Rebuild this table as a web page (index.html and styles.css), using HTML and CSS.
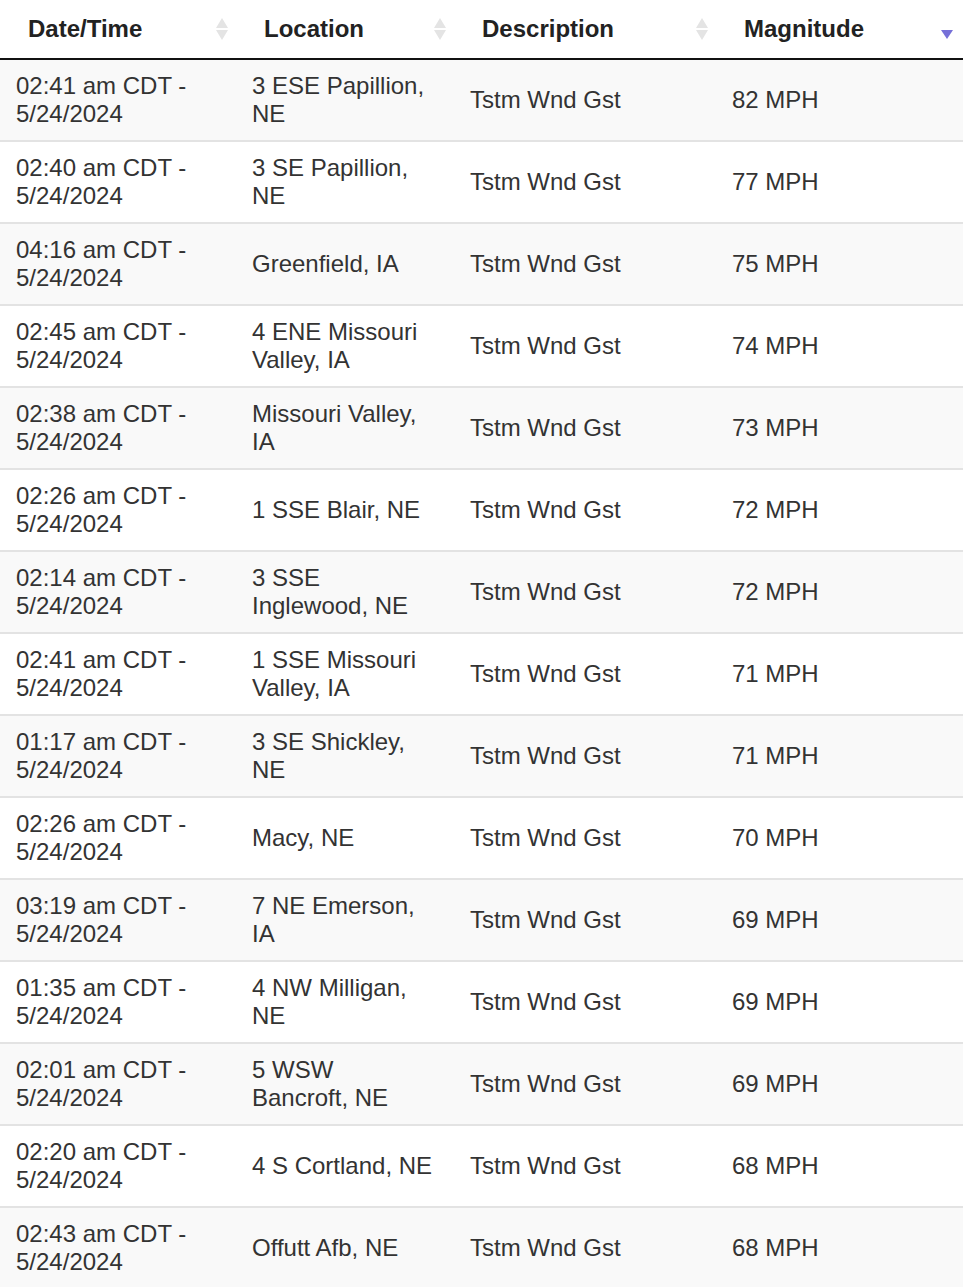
FILE: index.html
```html
<!DOCTYPE html>
<html lang="en">
<head>
<meta charset="utf-8">
<title>Storm Reports</title>
<link rel="stylesheet" href="styles.css">
</head>
<body>
<table class="reports">
  <colgroup>
    <col class="c-date"><col class="c-loc"><col class="c-desc"><col class="c-mag">
  </colgroup>
  <thead>
    <tr>
      <th class="sortable">Date/Time</th>
      <th class="sortable">Location</th>
      <th class="sortable">Description</th>
      <th class="sorted-desc">Magnitude</th>
    </tr>
  </thead>
  <tbody>
    <tr><td>02:41 am CDT - 5/24/2024</td><td class="loc">3 ESE Papillion, NE</td><td>Tstm Wnd Gst</td><td class="mag">82 MPH</td></tr>
    <tr><td>02:40 am CDT - 5/24/2024</td><td class="loc">3 SE Papillion, NE</td><td>Tstm Wnd Gst</td><td class="mag">77 MPH</td></tr>
    <tr><td>04:16 am CDT - 5/24/2024</td><td class="loc">Greenfield, IA</td><td>Tstm Wnd Gst</td><td class="mag">75 MPH</td></tr>
    <tr><td>02:45 am CDT - 5/24/2024</td><td class="loc">4 ENE Missouri Valley, IA</td><td>Tstm Wnd Gst</td><td class="mag">74 MPH</td></tr>
    <tr><td>02:38 am CDT - 5/24/2024</td><td class="loc">Missouri Valley, IA</td><td>Tstm Wnd Gst</td><td class="mag">73 MPH</td></tr>
    <tr><td>02:26 am CDT - 5/24/2024</td><td class="loc">1 SSE Blair, NE</td><td>Tstm Wnd Gst</td><td class="mag">72 MPH</td></tr>
    <tr><td>02:14 am CDT - 5/24/2024</td><td class="loc">3 SSE Inglewood, NE</td><td>Tstm Wnd Gst</td><td class="mag">72 MPH</td></tr>
    <tr><td>02:41 am CDT - 5/24/2024</td><td class="loc">1 SSE Missouri Valley, IA</td><td>Tstm Wnd Gst</td><td class="mag">71 MPH</td></tr>
    <tr><td>01:17 am CDT - 5/24/2024</td><td class="loc">3 SE Shickley, NE</td><td>Tstm Wnd Gst</td><td class="mag">71 MPH</td></tr>
    <tr><td>02:26 am CDT - 5/24/2024</td><td class="loc">Macy, NE</td><td>Tstm Wnd Gst</td><td class="mag">70 MPH</td></tr>
    <tr><td>03:19 am CDT - 5/24/2024</td><td class="loc">7 NE Emerson, IA</td><td>Tstm Wnd Gst</td><td class="mag">69 MPH</td></tr>
    <tr><td>01:35 am CDT - 5/24/2024</td><td class="loc">4 NW Milligan, NE</td><td>Tstm Wnd Gst</td><td class="mag">69 MPH</td></tr>
    <tr><td>02:01 am CDT - 5/24/2024</td><td class="loc">5 WSW Bancroft, NE</td><td>Tstm Wnd Gst</td><td class="mag">69 MPH</td></tr>
    <tr><td>02:20 am CDT - 5/24/2024</td><td class="loc">4 S Cortland, NE</td><td>Tstm Wnd Gst</td><td class="mag">68 MPH</td></tr>
    <tr><td>02:43 am CDT - 5/24/2024</td><td class="loc">Offutt Afb, NE</td><td>Tstm Wnd Gst</td><td class="mag">68 MPH</td></tr>
  </tbody>
</table>
</body>
</html>
```

FILE: styles.css
```css
html, body {
  margin: 0;
  padding: 0;
  background: #fff;
}

body {
  font-family: "Liberation Sans", Arial, sans-serif;
  font-size: 24px;
  color: #333;
}

.reports {
  width: 963px;
  border-collapse: collapse;
  border-spacing: 0;
  table-layout: fixed;
}

.c-date { width: 236px; }
.c-loc  { width: 218px; }
.c-desc { width: 262px; }
.c-mag  { width: 247px; }

.reports th {
  position: relative;
  text-align: left;
  font-weight: bold;
  color: #222;
  line-height: 28px;
  padding: 15px 28px 15px 28px;
  border-bottom: 2px solid #111;
  white-space: nowrap;
}

.reports th.sortable::before,
.reports th.sortable::after,
.reports th.sorted-desc::after {
  content: "";
  position: absolute;
  right: 8px;
  width: 0;
  height: 0;
  border-left: 6px solid transparent;
  border-right: 6px solid transparent;
}

.reports th.sortable::before {
  top: 18px;
  border-bottom: 10px solid #e4e4e4;
}

.reports th.sortable::after {
  top: 30px;
  border-top: 10px solid #e4e4e4;
}

.reports th.sorted-desc::after {
  right: 10px;
  top: 30px;
  border-left-width: 6px;
  border-right-width: 6px;
  border-top: 9px solid #7670d8;
}

.reports td {
  line-height: 28px;
  padding: 12px 16px;
  vertical-align: middle;
  border-bottom: 2px solid #e3e3e3;
}

.reports td.loc {
  padding-right: 20px;
}

.reports tbody tr:nth-child(odd) td {
  background: #f9f9f9;
}

.reports tbody tr:nth-child(even) td {
  background: #fff;
}
```
